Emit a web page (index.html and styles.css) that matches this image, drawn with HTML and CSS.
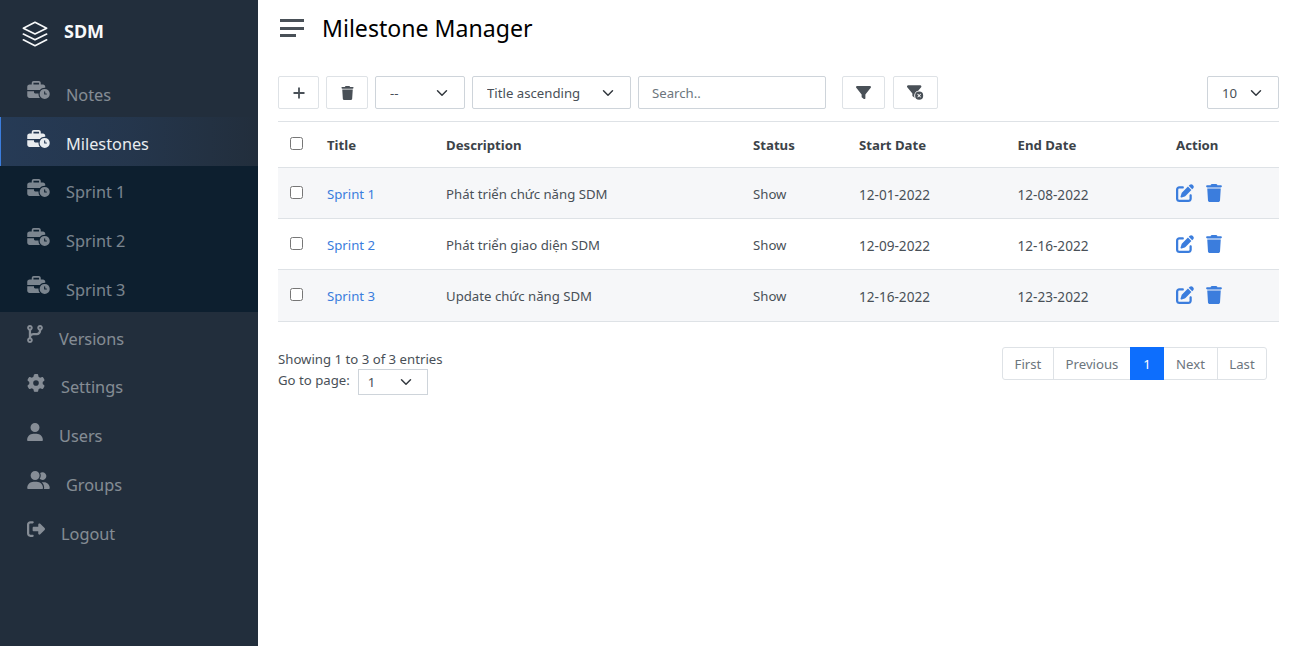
FILE: index.html
```html
<!DOCTYPE html>
<html>
<head>
    <meta charset="utf-8">
    <title>Milestone Manager</title>
    <link rel="stylesheet" href="styles.css">
</head>
<body>
    <svg class="sprite" xmlns="http://www.w3.org/2000/svg">
        <symbol id="i-case" viewBox="0 0 640 512"><path d="M184 48H328c4.400 0 8 3.600 8 8V96H176V56c0-4.400 3.600-8 8-8zm-56 8V96H64C28.700 96 0 124.700 0 160v96H192 352h8.200c32.300-39.100 81.100-64 135.800-64c5.400 0 10.700 .2 16 .7V160c0-35.300-28.700-64-64-64H384V56c0-30.900-25.100-56-56-56H184c-30.900 0-56 25.100-56 56zM320 352H224c-17.700 0-32-14.300-32-32V288H0V416c0 35.300 28.700 64 64 64H360.200C335.100 449.600 320 410.500 320 368c0-5.400 .2-10.700 .7-16l-.7 0zm320 16a144 144 0 1 0 -288 0 144 144 0 1 0 288 0zM496 288c8.800 0 16 7.200 16 16v48h32c8.800 0 16 7.200 16 16s-7.200 16-16 16H496c-8.800 0-16-7.200-16-16V304c0-8.800 7.200-16 16-16z"/></symbol>
        <symbol id="i-branch" viewBox="0 0 448 512"><path d="M80 104a24 24 0 1 0 0-48 24 24 0 1 0 0 48zm80-24c0 32.800-19.700 61-48 73.300v87.800c18.800-10.900 40.700-17.100 64-17.100h96c35.300 0 64-28.700 64-64v-6.700C307.700 141 288 112.800 288 80c0-44.200 35.800-80 80-80s80 35.800 80 80c0 32.800-19.700 61-48 73.300V160c0 70.700-57.300 128-128 128H176c-35.300 0-64 28.700-64 64v6.700c28.300 12.300 48 40.500 48 73.300c0 44.200-35.800 80-80 80s-80-35.800-80-80c0-32.800 19.700-61 48-73.300V353.300 153.300C19.700 141 0 112.800 0 80C0 35.800 35.800 0 80 0s80 35.800 80 80zm232 0a24 24 0 1 0 -48 0 24 24 0 1 0 48 0zM80 456a24 24 0 1 0 0-48 24 24 0 1 0 0 48z"/></symbol>
        <symbol id="i-gear" viewBox="0 0 512 512"><path d="M495.900 166.600c3.200 8.700 .5 18.400-6.400 24.600l-43.300 39.400c1.100 8.300 1.700 16.800 1.700 25.400s-.6 17.100-1.700 25.400l43.300 39.400c6.900 6.200 9.600 15.900 6.400 24.600c-4.400 11.900-9.700 23.300-15.800 34.300l-4.700 8.100c-6.600 11-14 21.400-22.100 31.200c-5.900 7.200-15.700 9.600-24.500 6.800l-55.700-17.700c-13.400 10.300-28.200 18.900-44 25.400l-12.500 57.100c-2 9.100-9 16.300-18.200 17.800c-13.800 2.300-28 3.500-42.500 3.500s-28.700-1.200-42.500-3.500c-9.200-1.500-16.200-8.700-18.200-17.800l-12.500-57.100c-15.800-6.500-30.600-15.100-44-25.400L83.100 425.900c-8.800 2.800-18.600 .3-24.500-6.800c-8.100-9.800-15.500-20.200-22.100-31.200l-4.700-8.100c-6.100-11-11.400-22.400-15.800-34.300c-3.200-8.700-.5-18.400 6.400-24.600l43.300-39.400C64.600 273.100 64 264.600 64 256s.6-17.100 1.700-25.400L22.400 191.200c-6.900-6.200-9.600-15.900-6.400-24.600c4.400-11.900 9.700-23.300 15.800-34.300l4.700-8.100c6.600-11 14-21.400 22.100-31.200c5.900-7.200 15.700-9.600 24.500-6.800l55.700 17.700c13.400-10.300 28.200-18.900 44-25.400l12.500-57.100c2-9.100 9-16.300 18.200-17.800C227.300 1.200 241.500 0 256 0s28.700 1.200 42.500 3.500c9.200 1.500 16.200 8.700 18.200 17.800l12.500 57.100c15.800 6.500 30.600 15.100 44 25.400l55.700-17.700c8.800-2.800 18.600-.3 24.500 6.800c8.100 9.800 15.500 20.200 22.100 31.200l4.700 8.100c6.100 11 11.400 22.400 15.800 34.300zM256 336a80 80 0 1 0 0-160 80 80 0 1 0 0 160z"/></symbol>
        <symbol id="i-user" viewBox="0 0 448 512"><path d="M224 256A128 128 0 1 0 224 0a128 128 0 1 0 0 256zm-45.700 48C79.800 304 0 383.800 0 482.300C0 498.700 13.300 512 29.700 512H418.300c16.400 0 29.700-13.300 29.700-29.700C448 383.800 368.200 304 269.700 304H178.300z"/></symbol>
        <symbol id="i-group" viewBox="0 0 640 512"><path d="M96 128a128 128 0 1 1 256 0A128 128 0 1 1 96 128zM0 482.300C0 383.800 79.800 304 178.300 304h91.400C368.200 304 448 383.800 448 482.300c0 16.400-13.300 29.700-29.700 29.700H29.700C13.300 512 0 498.700 0 482.300zM609.300 512H471.400c5.400-9.400 8.600-20.300 8.600-32v-8c0-60.700-27.100-115.200-69.800-151.800c2.400-.1 4.700-.2 7.100-.2h61.400C567.800 320 640 392.200 640 481.300c0 17-13.800 30.700-30.700 30.700zM432 256c-31 0-59-12.600-79.300-32.900C372.400 196.500 384 163.600 384 128c0-26.800-6.600-52.100-18.300-74.300C384.300 40.100 407.200 32 432 32c61.900 0 112 50.100 112 112s-50.100 112-112 112z"/></symbol>
        <symbol id="i-logout" viewBox="0 0 512 512"><path d="M377.900 105.900L500.700 228.700c7.200 7.200 11.300 17.100 11.300 27.300s-4.100 20.100-11.300 27.300L377.900 406.100c-6.400 6.400-15 9.900-24 9.900c-18.700 0-33.900-15.200-33.900-33.900l0-62.100-128 0c-17.700 0-32-14.300-32-32l0-64c0-17.700 14.300-32 32-32l128 0 0-62.100c0-18.700 15.200-33.900 33.900-33.900c9 0 17.600 3.600 24 9.900zM160 96L96 96c-17.700 0-32 14.300-32 32l0 256c0 17.700 14.300 32 32 32l64 0c17.700 0 32 14.300 32 32s-14.300 32-32 32l-64 0c-53 0-96-43-96-96L0 128C0 75 43 32 96 32l64 0c17.700 0 32 14.300 32 32s-14.300 32-32 32z"/></symbol>
        <symbol id="i-trash" viewBox="0 0 448 512"><path d="M135.200 17.700L128 32H32C14.300 32 0 46.300 0 64S14.300 96 32 96H416c17.700 0 32-14.300 32-32s-14.300-32-32-32H320l-7.200-14.300C307.400 6.800 296.300 0 284.200 0H163.800c-12.100 0-23.200 6.800-28.600 17.700zM416 128H32L53.200 467c1.600 25.300 22.600 45 47.900 45H346.900c25.300 0 46.300-19.700 47.900-45L416 128z"/></symbol>
        <symbol id="i-edit" viewBox="0 0 512 512"><path d="M471.600 21.700c-21.900-21.900-57.300-21.900-79.200 0L362.300 51.700l97.900 97.900 30.100-30.100c21.900-21.900 21.900-57.300 0-79.200L471.600 21.700zm-299.200 220c-6.100 6.100-10.800 13.600-13.500 21.900l-29.600 88.800c-2.900 8.600-.6 18.100 5.800 24.600s15.900 8.700 24.600 5.800l88.800-29.600c8.200-2.700 15.700-7.400 21.900-13.500L437.700 172.300 339.700 74.300 172.400 241.700zM96 64C43 64 0 107 0 160V416c0 53 43 96 96 96H352c53 0 96-43 96-96V320c0-17.700-14.300-32-32-32s-32 14.300-32 32v96c0 17.700-14.300 32-32 32H96c-17.700 0-32-14.300-32-32V160c0-17.700 14.300-32 32-32h96c17.700 0 32-14.300 32-32s-14.300-32-32-32H96z"/></symbol>
        <symbol id="i-filter" viewBox="0 0 512 512"><path d="M3.900 54.900C10.500 40.900 24.500 32 40 32H472c15.500 0 29.500 8.900 36.100 22.900s4.600 30.500-5.200 42.500L320 320.900V448c0 12.100-6.800 23.200-17.700 28.600s-23.800 4.300-33.500-3l-64-48c-8.100-6-12.800-15.500-12.800-25.600V320.900L9 97.300C-.7 85.400-2.800 68.800 3.900 54.900z"/></symbol>
        <symbol id="i-filter-x" viewBox="0 0 640 512"><path d="M3.900 22.900C10.500 8.900 24.500 0 40 0H472c15.500 0 29.500 8.900 36.100 22.900s4.600 30.500-5.200 42.500L396.400 195.600C316.200 212.100 256 283.100 256 368c0 27.400 6.300 53.300 17.500 76.400c-1.600-.8-3.200-1.800-4.700-2.900l-64-48c-8.100-6-12.800-15.500-12.800-25.600V288.900L9 65.300C-.7 53.400-2.800 36.800 3.900 22.900zM432 512a144 144 0 1 1 0-288 144 144 0 1 1 0 288zm59.300-180.700c6.200-6.200 6.200-16.400 0-22.600s-16.400-6.200-22.600 0L432 345.400l-36.700-36.700c-6.200-6.200-16.400-6.200-22.600 0s-6.200 16.400 0 22.600L409.400 368l-36.700 36.700c-6.200 6.200-6.200 16.400 0 22.600s16.400 6.200 22.600 0L432 390.600l36.700 36.700c6.200 6.200 16.400 6.200 22.600 0s6.200-16.400 0-22.600L454.600 368l36.700-36.700z"/></symbol>
    </svg>

    <div class="wrapper">
        <nav class="sidebar">
            <a class="brand" href="#">
                <svg class="brand-icon" viewBox="0 0 24 24"><polygon points="12 2 2 7 12 12 22 7 12 2"/><polyline points="2 17 12 22 22 17"/><polyline points="2 12 12 17 22 12"/></svg>
                <span>SDM</span>
            </a>
            <ul class="side-menu">
                <li><a href="#"><svg class="side-icon wide"><use href="#i-case"/></svg>Notes</a></li>
                <li class="active"><a href="#"><svg class="side-icon wide"><use href="#i-case"/></svg>Milestones</a></li>
                <li class="sub"><a href="#"><svg class="side-icon wide"><use href="#i-case"/></svg>Sprint 1</a></li>
                <li class="sub"><a href="#"><svg class="side-icon wide"><use href="#i-case"/></svg>Sprint 2</a></li>
                <li class="sub"><a href="#"><svg class="side-icon wide"><use href="#i-case"/></svg>Sprint 3</a></li>
                <li><a href="#"><svg class="side-icon narrow"><use href="#i-branch"/></svg>Versions</a></li>
                <li><a href="#"><svg class="side-icon square"><use href="#i-gear"/></svg>Settings</a></li>
                <li><a href="#"><svg class="side-icon narrow"><use href="#i-user"/></svg>Users</a></li>
                <li><a href="#"><svg class="side-icon wide"><use href="#i-group"/></svg>Groups</a></li>
                <li><a href="#"><svg class="side-icon square"><use href="#i-logout"/></svg>Logout</a></li>
            </ul>
        </nav>

        <main class="main">
            <div class="topbar">
                <div class="hamburger"><span></span><span></span><span></span></div>
                <h1>Milestone Manager</h1>
            </div>

            <div class="toolbar">
                <button class="btn btn-add"><svg class="plus" viewBox="0 0 14 14"><path d="M7 1.500v11M1.500 7h11"/></svg></button>
                <button class="btn btn-del"><svg class="tool-icon"><use href="#i-trash"/></svg></button>
                <select class="form-select sel-status"><option>--</option></select>
                <select class="form-select sel-sort"><option>Title ascending</option></select>
                <input class="search" type="text" placeholder="Search..">
                <button class="btn btn-filter"><svg class="filter-icon"><use href="#i-filter"/></svg></button>
                <button class="btn btn-clear"><svg class="clear-icon"><use href="#i-filter-x"/></svg></button>
                <select class="form-select sel-size"><option>10</option></select>
            </div>

            <table class="data-table">
                <thead>
                    <tr>
                        <th class="col-check"><input type="checkbox"></th>
                        <th class="col-title">Title</th>
                        <th class="col-desc">Description</th>
                        <th class="col-status">Status</th>
                        <th class="col-date">Start Date</th>
                        <th class="col-date">End Date</th>
                        <th>Action</th>
                    </tr>
                </thead>
                <tbody>
                    <tr>
                        <td><input type="checkbox"></td>
                        <td><a href="#">Sprint 1</a></td>
                        <td>Phát triển chức năng SDM</td>
                        <td>Show</td>
                        <td class="date">12-01-2022</td>
                        <td class="date">12-08-2022</td>
                        <td class="actions"><svg class="act-edit"><use href="#i-edit"/></svg><svg class="act-del"><use href="#i-trash"/></svg></td>
                    </tr>
                    <tr>
                        <td><input type="checkbox"></td>
                        <td><a href="#">Sprint 2</a></td>
                        <td>Phát triển giao diện SDM</td>
                        <td>Show</td>
                        <td class="date">12-09-2022</td>
                        <td class="date">12-16-2022</td>
                        <td class="actions"><svg class="act-edit"><use href="#i-edit"/></svg><svg class="act-del"><use href="#i-trash"/></svg></td>
                    </tr>
                    <tr>
                        <td><input type="checkbox"></td>
                        <td><a href="#">Sprint 3</a></td>
                        <td>Update chức năng SDM</td>
                        <td>Show</td>
                        <td class="date">12-16-2022</td>
                        <td class="date">12-23-2022</td>
                        <td class="actions"><svg class="act-edit"><use href="#i-edit"/></svg><svg class="act-del"><use href="#i-trash"/></svg></td>
                    </tr>
                </tbody>
            </table>

            <div class="table-foot">
                <div class="info">
                    <div>Showing 1 to 3 of 3 entries</div>
                    <div class="goto">Go to page: <select class="form-select sel-page"><option>1</option></select></div>
                </div>
                <ul class="pagination">
                    <li class="pg-first"><a href="#">First</a></li>
                    <li class="pg-prev"><a href="#">Previous</a></li>
                    <li class="pg-num current"><a href="#">1</a></li>
                    <li class="pg-next"><a href="#">Next</a></li>
                    <li class="pg-last"><a href="#">Last</a></li>
                </ul>
            </div>
        </main>
    </div>
</body>
</html>
```

FILE: styles.css
```css
* {
    box-sizing: border-box;
}

body {
    margin: 0;
    font-family: "Noto Sans", "Open Sans", sans-serif;
    font-size: 13.2px;
    color: #495057;
    background-color: #fff;
}

a {
    text-decoration: none;
}

ul {
    list-style: none;
    margin: 0;
    padding: 0;
}

.sprite {
    display: none;
}

.wrapper {
    display: flex;
    min-height: 100vh;
}

/* sidebar */
.sidebar {
    width: 258px;
    flex-shrink: 0;
    background-color: #222e3c;
}

.brand {
    display: flex;
    align-items: center;
    height: 68px;
    padding: 0 0 6px 20.500px;
    color: #f8f9fa;
    font-size: 18px;
    font-weight: 700;
}

.brand-icon {
    width: 28px;
    height: 28px;
    margin-right: 15.500px;
    fill: none;
    stroke: #f8f9fa;
    stroke-width: 1.400;
    stroke-linejoin: round;
    stroke-linecap: round;
    position: relative;
    top: 3px;
}

.side-menu a {
    display: flex;
    align-items: center;
    height: 48.750px;
    padding: 5px 0 0 27px;
    color: rgba(233, 236, 239, 0.5);
    font-size: 16.300px;
}

.side-icon {
    height: 18px;
    margin-right: 16px;
    fill: currentColor;
    position: relative;
    top: -4.500px;
}

.side-icon.wide {
    width: 23px;
}

.side-icon.narrow {
    width: 16px;
}

.side-icon.square {
    width: 18px;
}

.side-menu .active {
    background: linear-gradient(90deg, rgba(59, 125, 221, 0.16), rgba(59, 125, 221, 0.1) 50%, rgba(59, 125, 221, 0));
    box-shadow: inset 1px 0 0 #3b7ddd;
}

.side-menu .active a {
    color: #e9ecef;
}

.side-menu .sub {
    background-color: #0d1f2f;
}

/* top */
.main {
    flex: 1;
    min-width: 0;
    padding: 0 21px 0 20px;
}

.topbar {
    display: flex;
    align-items: center;
    height: 76px;
    padding: 10px 0 30px;
}

.hamburger {
    width: 24px;
    margin: 0 18px 0 2px;
}

.hamburger span {
    display: block;
    height: 3px;
    margin-bottom: 4.500px;
    background-color: #495057;
}

.hamburger span:last-child {
    width: 16px;
    margin-bottom: 0;
}

h1 {
    margin: 0;
    font-size: 23.100px;
    font-weight: 400;
    color: #000;
}

/* toolbar */
.toolbar {
    display: flex;
    align-items: center;
    gap: 7px;
    height: 33px;
}

.btn {
    display: flex;
    align-items: center;
    justify-content: center;
    height: 33px;
    padding: 0;
    background-color: #fff;
    border: 1px solid #dee2e6;
    border-radius: 2px;
}

.btn-add {
    width: 41px;
}

.btn-del {
    width: 42px;
}

.btn-filter {
    width: 43px;
    margin-left: 9px;
}

.btn-clear {
    width: 45px;
    margin-left: 1px;
}

.plus {
    width: 14px;
    height: 14px;
    fill: none;
    stroke: #495057;
    stroke-width: 1.800;
}

.tool-icon {
    width: 13px;
    height: 14px;
    fill: #495057;
}

.filter-icon {
    width: 15px;
    height: 15px;
    fill: #495057;
}

.clear-icon {
    width: 18px;
    height: 15px;
    fill: #495057;
}

.form-select {
    height: 33px;
    padding: 0 30px 0 14px;
    font-family: inherit;
    font-size: 13.200px;
    color: #495057;
    background-color: #fff;
    background-image: url("data:image/svg+xml,%3csvg xmlns='http://www.w3.org/2000/svg' viewBox='0 0 16 16'%3e%3cpath fill='none' stroke='%23343a40' stroke-linecap='round' stroke-linejoin='round' stroke-width='2' d='M2 5l6 6 6-6'/%3e%3c/svg%3e");
    background-repeat: no-repeat;
    background-position: right 15px center;
    background-size: 14px 12px;
    border: 1px solid #ced4da;
    border-radius: 2px;
    appearance: none;
}

.sel-status {
    width: 90px;
}

.sel-sort {
    width: 159px;
}

.sel-size {
    width: 72px;
    margin-left: auto;
}

.search {
    width: 188px;
    height: 33px;
    padding: 0 13px;
    font-family: inherit;
    font-size: 13.200px;
    color: #495057;
    border: 1px solid #ced4da;
    border-radius: 2px;
}

.search::placeholder {
    color: #6c757d;
}

/* table */
.data-table {
    width: 100%;
    margin-top: 12px;
    border-collapse: collapse;
    table-layout: fixed;
}

.data-table th,
.data-table td {
    padding: 0 12px;
    text-align: left;
    vertical-align: middle;
    border-top: 1px solid #dee2e6;
}

.data-table td {
    padding-top: 2px;
}

.data-table td.date {
    font-size: 13.600px;
}

.data-table thead tr {
    height: 46px;
}

.data-table th {
    font-weight: 700;
    color: #3c4349;
}

.data-table tbody tr {
    height: 51px;
}

.data-table tbody tr:nth-child(odd) {
    background-color: #f6f7f9;
}

.data-table tbody tr:last-child {
    height: 52px;
}

.data-table tbody tr:last-child td {
    padding-top: 1px;
    border-bottom: 1px solid #dee2e6;
}

.data-table input {
    display: block;
    width: 13px;
    height: 13px;
    margin: 0 0 4px;
}

.data-table th input {
    margin-bottom: 2px;
}

.data-table a {
    color: #3b7ddd;
}

.col-check {
    width: 37px;
}

.col-title {
    width: 119px;
}

.col-desc {
    width: 307px;
}

.col-status {
    width: 106px;
}

.col-date {
    width: 158.500px;
}

.actions svg {
    height: 18px;
    fill: #3b7ddd;
    vertical-align: middle;
    position: relative;
    top: -2px;
}

.act-edit {
    width: 18px;
    margin-right: 12px;
}

.act-del {
    width: 16px;
}

/* footer */
.table-foot {
    display: flex;
    justify-content: space-between;
    align-items: flex-start;
    padding: 25px 12px 0 0;
}

.info {
    line-height: 22px;
    margin-top: 1px;
}

.goto {
    display: flex;
    align-items: flex-start;
    gap: 8px;
    height: 22px;
    margin-top: -1px;
}

.sel-page {
    width: 70px;
    height: 26px;
    padding: 0 9px;
    background-position: right 14px center;
    border-radius: 0;
}

.pagination {
    display: flex;
    height: 33px;
    border: 1px solid #dee2e6;
    border-radius: 3px;
}

.pagination li {
    display: flex;
    align-items: center;
    justify-content: center;
    border-left: 1px solid #dee2e6;
}

.pagination li:first-child {
    border-left: none;
}

.pagination a {
    color: #6c757d;
}

.pg-first {
    width: 50px;
}

.pg-prev {
    width: 77px;
}

.pagination .pg-num {
    width: 34px;
    margin: -1px 0;
    background-color: #0d6efd;
    border-left: none;
}

.pagination .pg-num a {
    color: #fff;
}

.pagination .pg-next {
    width: 53px;
    border-left: none;
}

.pg-last {
    width: 49px;
}
```
